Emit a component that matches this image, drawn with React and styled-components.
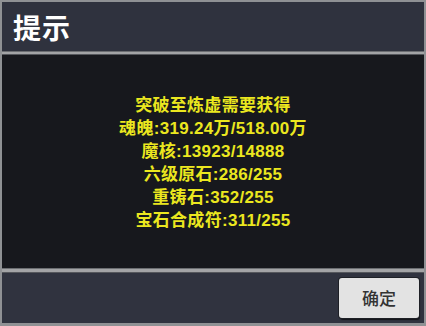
import styled, { createGlobalStyle } from "styled-components";

const GlobalStyle = createGlobalStyle`
  html, body {
    margin: 0;
    padding: 0;
    background: #000;
  }
  body {
    font-family: "Noto Sans CJK SC", "Noto Sans", sans-serif;
  }
`;

const Frame = styled.div`
  width: 426px;
  height: 326px;
  box-sizing: border-box;
  border: 2px solid #8f9194;
  border-bottom-width: 3px;
  display: flex;
  flex-direction: column;
  background: #17181d;
`;

const Header = styled.div`
  height: 49px;
  background: #2f323e;
  display: flex;
  align-items: center;
  padding-left: 11px;
`;

const Title = styled.div`
  color: #ffffff;
  font-size: 28px;
  font-weight: 700;
  line-height: 1;
  letter-spacing: 1px;
`;

const Divider = styled.div`
  height: ${(props) => props.size}px;
  background: #a3a4a6;
  border-top: 1px solid #6c6e72;
  border-bottom: 1px solid #55575c;
  box-sizing: border-box;
`;

const Body = styled.div`
  height: 213px;
  background: #17181d;
  display: flex;
  flex-direction: column;
  align-items: center;
  justify-content: center;
  padding-top: 2px;
  box-sizing: border-box;
`;

const Line = styled.div`
  color: #ebe71f;
  font-family: "Liberation Sans", "Noto Sans CJK SC", sans-serif;
  font-size: 17px;
  font-weight: 700;
  line-height: 23px;
  letter-spacing: 0.3px;
  text-align: center;
  white-space: nowrap;
`;

const Footer = styled.div`
  height: 50px;
  background: #30333f;
  display: flex;
  align-items: center;
  justify-content: flex-end;
  padding-right: 5px;
`;

const Button = styled.button`
  width: 80px;
  height: 40px;
  border: none;
  border-radius: 3px;
  background: #e3e3e3;
  box-shadow: 0 0 0 1px #1e2026, 1px 2px 1px rgba(0, 0, 0, 0.6);
  color: #333333;
  font-family: "Noto Sans CJK SC", "Noto Sans", sans-serif;
  font-size: 17px;
  font-weight: 500;
  padding: 0;
  margin-top: -1px;
`;

const lines = [
  "突破至炼虚需要获得",
  "魂魄:319.24万/518.00万",
  "魔核:13923/14888",
  "六级原石:286/255",
  "重铸石:352/255",
  "宝石合成符:311/255",
];

export default function App() {
  return (
    <>
      <GlobalStyle />
      <Frame>
        <Header>
          <Title>提示</Title>
        </Header>
        <Divider size={4} />
        <Body>
          {lines.map((t) => (
            <Line key={t}>{t}</Line>
          ))}
        </Body>
        <Divider size={5} />
        <Footer>
          <Button>确定</Button>
        </Footer>
      </Frame>
    </>
  );
}
